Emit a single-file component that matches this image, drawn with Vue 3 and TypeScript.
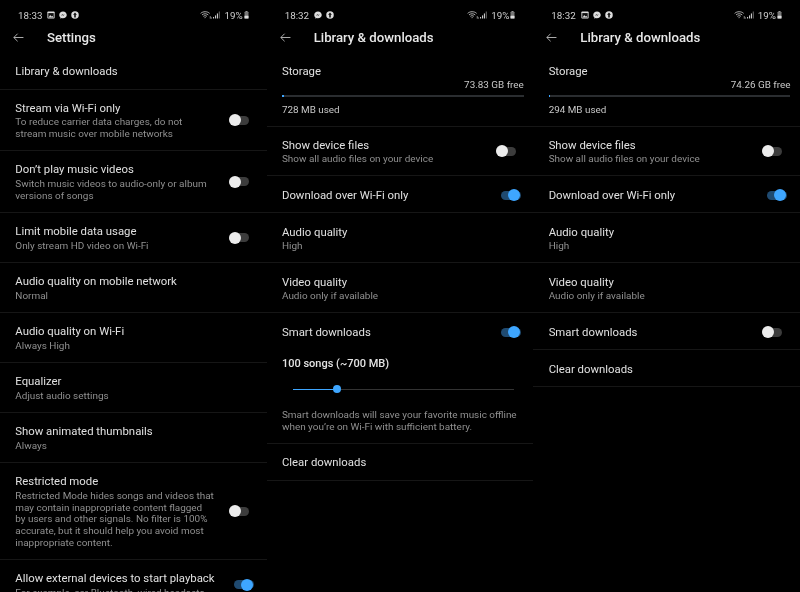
<script setup lang="ts">
interface Row {
  title: string
  sub?: string
  toggle?: boolean
  storage?: { free: string; used: string; pct: number }
  smart?: boolean
  clip?: boolean
}
interface Panel {
  time: string
  photo: boolean
  title: string
  rows: Row[]
}
const deviceRows = (on: boolean): Row[] => [
  { title: 'Show device files', sub: 'Show all audio files on your device', toggle: false },
  { title: 'Download over Wi-Fi only', toggle: true },
  { title: 'Audio quality', sub: 'High' },
  { title: 'Video quality', sub: 'Audio only if available' },
  { title: 'Smart downloads', toggle: on, smart: on },
  { title: 'Clear downloads' },
]
const panels: Panel[] = [
  {
    time: '18:33',
    photo: true,
    title: 'Settings',
    rows: [
      { title: 'Library & downloads' },
      { title: 'Stream via Wi-Fi only', sub: 'To reduce carrier data charges, do not\nstream music over mobile networks', toggle: false },
      { title: 'Don\u2019t play music videos', sub: 'Switch music videos to audio-only or album\nversions of songs', toggle: false },
      { title: 'Limit mobile data usage', sub: 'Only stream HD video on Wi-Fi', toggle: false },
      { title: 'Audio quality on mobile network', sub: 'Normal' },
      { title: 'Audio quality on Wi-Fi', sub: 'Always High' },
      { title: 'Equalizer', sub: 'Adjust audio settings' },
      { title: 'Show animated thumbnails', sub: 'Always' },
      {
        title: 'Restricted mode',
        sub: 'Restricted Mode hides songs and videos that\nmay contain inappropriate content flagged\nby users and other signals. No filter is 100%\naccurate, but it should help you avoid most\ninappropriate content.',
        toggle: false,
      },
      { title: 'Allow external devices to start playback', sub: 'For example, car Bluetooth, wired headsets', toggle: true, clip: true },
    ],
  },
  {
    time: '18:32',
    photo: false,
    title: 'Library & downloads',
    rows: [{ title: 'Storage', storage: { free: '73.83 GB free', used: '728 MB used', pct: 1 } }, ...deviceRows(true)],
  },
  {
    time: '18:32',
    photo: true,
    title: 'Library & downloads',
    rows: [{ title: 'Storage', storage: { free: '74.26 GB free', used: '294 MB used', pct: 0.5 } }, ...deviceRows(false)],
  },
]
</script>

<template>
  <div class="screen">
    <section v-for="(p, i) in panels" :key="i" class="panel">
      <div class="status">
        <span class="time">{{ p.time }}</span>
        <svg v-if="p.photo" class="ico" viewBox="0 0 10 10">
          <rect x="0.5" y="0.5" width="9" height="9" rx="1" fill="#ddd" />
          <rect x="1.6" y="2.6" width="6.8" height="5.8" fill="#111" />
          <path d="M2 8l2-3 1.6 2 1-1 1.6 2z" fill="#ddd" />
        </svg>
        <svg class="ico" viewBox="0 0 10 10">
          <path d="M5 .6C2.3.6.3 2.5.3 4.9c0 1.3.6 2.4 1.5 3.1v1.6l1.5-.8c.5.2 1.1.3 1.7.3 2.7 0 4.7-1.9 4.7-4.2S7.7.6 5 .6z" fill="#ddd" />
          <path d="M2.3 6l1.9-2 1.2 1 1.9-1.2-1.9 2.1-1.2-1z" fill="#111" />
        </svg>
        <svg class="ico" viewBox="0 0 10 10">
          <circle cx="5" cy="5" r="4.7" fill="#ddd" />
          <path d="M5 1.8L7.4 4.8H6V8H4V4.8H2.6z" fill="#111" />
        </svg>
        <span class="grow"></span>
        <svg class="wifi" viewBox="0 0 14 10" fill="none" stroke="#ccc" stroke-width="1">
          <path d="M.7 2.8C3.6.2 8.4.2 11.3 2.8M2.3 4.6c2.1-1.8 5.3-1.8 7.4 0M3.9 6.3c1.2-1 3-1 4.2 0M5.3 7.9c.4-.4 1-.4 1.4 0" />
          <path d="M12 6v3M13.3 7.5v1.5" stroke-width=".8" />
        </svg>
        <svg class="signal" viewBox="0 0 9 10">
          <rect x="0" y="7.5" width="1.4" height="2" fill="#ccc" />
          <rect x="2.6" y="5.5" width="1.4" height="4" fill="#ccc" />
          <rect x="5" y="3" width="1.4" height="6.5" fill="#ccc" />
          <rect x="7.4" y="0.5" width="1.4" height="9" fill="#666" />
        </svg>
        <span class="pct">19%</span>
        <svg class="batt" viewBox="0 0 6 10">
          <rect x="1.8" y="0" width="2.4" height="1" fill="#ccc" />
          <rect x="0.5" y="1" width="5" height="8.5" rx=".6" fill="#777" />
          <rect x="0.5" y="6" width="5" height="3.5" rx=".4" fill="#ddd" />
        </svg>
      </div>

      <header class="bar">
        <svg class="back" viewBox="0 0 12 10" fill="none" stroke="#bdbdbd" stroke-width="1">
          <path d="M11.5 5H.8M5 .8L.8 5 5 9.2" />
        </svg>
        <h1>{{ p.title }}</h1>
      </header>

      <div
        v-for="r in p.rows"
        :key="r.title"
        class="row"
        :class="{ single: !r.sub && !r.storage, 'storage-row': r.storage, 'smart-row': r.smart, clip: r.clip }"
      >
        <template v-if="r.storage">
          <div class="title">{{ r.title }}</div>
          <div class="free">{{ r.storage.free }}</div>
          <div class="meter"><div class="meter-fill" :style="{ width: r.storage.pct + '%' }"></div></div>
          <div class="used">{{ r.storage.used }}</div>
        </template>
        <template v-else>
          <div class="main">
            <div class="text">
              <div class="title">{{ r.title }}</div>
              <div v-if="r.sub" class="sub">{{ r.sub }}</div>
            </div>
            <div v-if="r.toggle !== undefined" class="toggle" :class="{ on: r.toggle }">
              <span class="track"></span>
              <span class="knob"></span>
            </div>
          </div>
          <div v-if="r.smart" class="smart">
            <div class="songs">100 songs (~700 MB)</div>
            <div class="slider">
              <div class="slider-fill"></div>
              <span class="thumb"></span>
            </div>
            <div class="note">Smart downloads will save your favorite music offline
when you’re on Wi-Fi with sufficient battery.</div>
          </div>
        </template>
      </div>
    </section>
  </div>
</template>

<style scoped>
.screen {
  display: grid;
  grid-template-columns: repeat(3, 1fr);
  width: 800px;
  height: 592px;
  overflow: hidden;
  background: #000;
  font-family: Roboto, "Liberation Sans", sans-serif;
  color: #e2e2e2;
  filter: blur(0.45px);
}
.panel {
  min-width: 0;
  overflow: hidden;
}
.status {
  display: flex;
  align-items: center;
  height: 16px;
  margin-top: 7px;
  padding: 0 18px 0 18px;
  gap: 4px;
  font-size: 9.8px;
  color: #d0d0d0;
}
.time {
  margin-right: 1px;
}
.ico {
  width: 8px;
  height: 8px;
}
.grow {
  flex: 1;
}
.wifi {
  width: 12px;
  height: 8.5px;
  margin-right: -3px;
}
.signal {
  width: 7px;
  height: 8px;
}
.batt {
  width: 5px;
  height: 8px;
  margin-left: -3px;
}
.bar {
  display: flex;
  align-items: center;
  height: 29.5px;
  padding: 0 0 1px 13px;
  box-sizing: border-box;
}
.back {
  width: 11px;
  height: 9px;
  margin-right: 23px;
}
h1 {
  margin: 0;
  font-size: 13.2px;
  font-weight: 500;
  color: #e8e8e8;
}
.row {
  padding: 11.1px 11.5px 10.35px 15.3px;
  border-bottom: 1px solid #161616;
}
.row.single {
  padding-top: 11.5px;
  padding-bottom: 9.5px;
}
.row.storage-row {
  padding-top: 11px;
  padding-bottom: 9.5px;
}
.row.smart-row {
  padding-top: 11.5px;
  padding-bottom: 9.5px;
}
.row.clip {
  padding-bottom: 0;
}
.main {
  display: flex;
  align-items: center;
  justify-content: space-between;
}
.text {
  min-width: 0;
}
.title {
  font-size: 11.35px;
  line-height: 15px;
  color: #e0e0e0;
  white-space: nowrap;
}
.sub {
  margin-top: 0.8px;
  font-size: 9.95px;
  line-height: 11.75px;
  color: #909090;
  white-space: pre-line;
}
.free {
  margin-top: -0.5px;
  margin-right: -2px;
  text-align: right;
  font-size: 9.9px;
  line-height: 14px;
  color: #c8c8c8;
}
.meter {
  height: 2px;
  margin: 3px -2px 0 0;
  background: #2a2d30;
}
.meter-fill {
  height: 100%;
  background: #3ea6ff;
}
.used {
  margin-top: 6px;
  font-size: 9.9px;
  line-height: 13px;
  color: #c8c8c8;
}
.toggle {
  position: relative;
  flex: none;
  width: 26px;
  height: 12px;
}
.track {
  display: block;
  width: 20px;
  height: 9px;
  margin-top: 1.5px;
  border-radius: 5px;
  background: #3c3c3c;
}
.knob {
  position: absolute;
  top: 0;
  left: 0;
  width: 12px;
  height: 12px;
  border-radius: 50%;
  background: #ececec;
}
.toggle.on .track {
  margin-left: 5px;
  background: #1f4a70;
}
.toggle.on .knob {
  left: 12px;
  background: #3ea6ff;
}
.smart {
  margin-top: 17px;
}
.songs {
  font-size: 11px;
  line-height: 14px;
  font-weight: 500;
  color: #e4e4e4;
}
.slider {
  position: relative;
  height: 1px;
  margin: 18px 8px 0 11px;
  background: #333;
}
.slider-fill {
  width: 20%;
  height: 100%;
  background: #3ea6ff;
}
.thumb {
  position: absolute;
  top: -3.5px;
  left: 20%;
  width: 8px;
  height: 8px;
  margin-left: -4px;
  border-radius: 50%;
  background: #3ea6ff;
}
.note {
  margin: 19.5px 0 0;
  font-size: 9.95px;
  line-height: 12px;
  color: #909090;
  white-space: pre-line;
}
</style>
<style>
html, body { background: #000; }
</style>
